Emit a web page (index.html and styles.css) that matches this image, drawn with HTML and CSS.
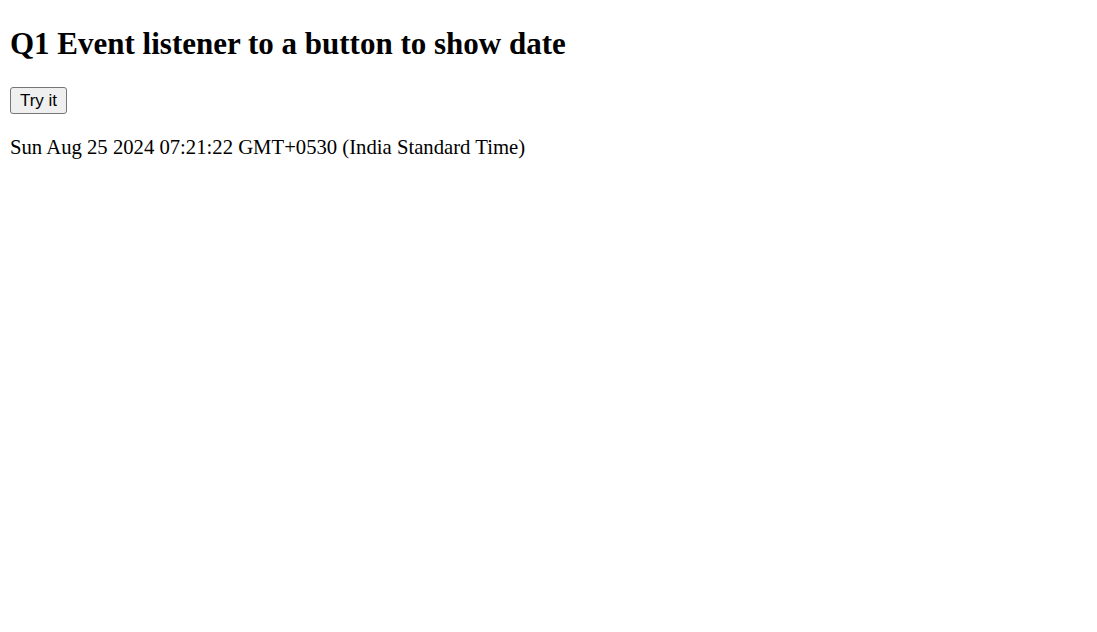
FILE: index.html
```html
<!DOCTYPE html>
<html>
<head>
<meta charset="utf-8">
<title>Q1</title>
<link rel="stylesheet" href="styles.css">
</head>
<body class="page">
<h1 class="title">Q1 Event listener to a button to show date</h1>
<button class="try-btn">Try it</button>
<p class="date">Sun Aug 25 2024 07:21:22 GMT+0530 (India Standard Time)</p>
</body>
</html>
```
FILE: styles.css
```css
html, body {
  margin: 0;
  padding: 0;
}
.page {
  padding: 0 10px;
  font-family: "Liberation Serif", "Times New Roman", serif;
  color: #000;
  background: #fff;
}
.title {
  font-size: 31px;
  line-height: 36px;
  font-weight: bold;
  margin: 26px 0 0;
}
.try-btn {
  display: block;
  box-sizing: border-box;
  margin-top: 25px;
  width: 57px;
  height: 27px;
  padding: 0;
  font-family: "Liberation Sans", Arial, sans-serif;
  font-size: 17px;
  line-height: 20px;
  text-align: center;
  background: #efefef;
  border: 1px solid #767676;
  border-radius: 3px;
  color: #000;
}
.date {
  font-size: 20.7px;
  line-height: 24px;
  margin: 21px 0 0;
}
```
